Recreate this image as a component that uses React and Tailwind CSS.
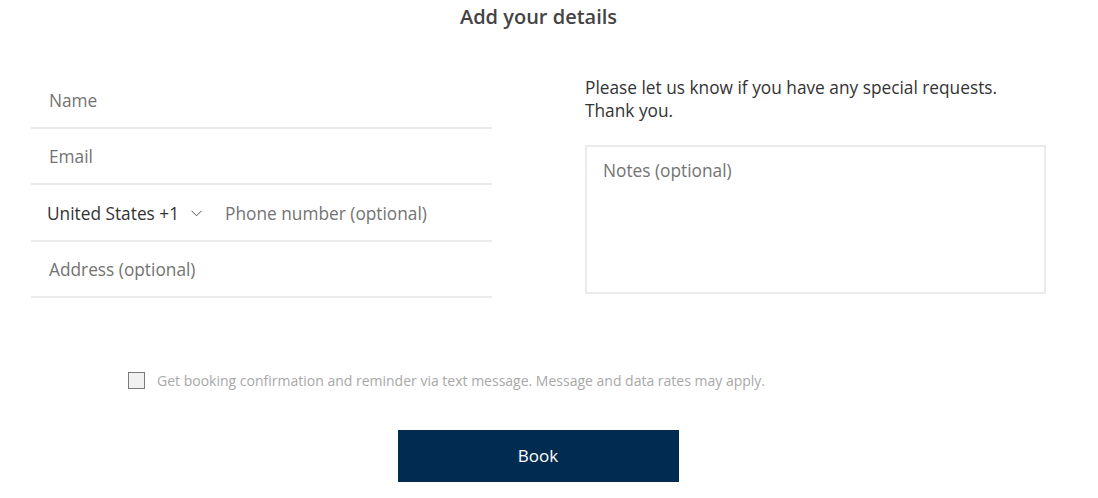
import { useState } from "react";

const FONT = { fontFamily: '"Open Sans", "Noto Sans", sans-serif' };

function Field({ placeholder, children }) {
  return (
    <div className="flex h-[56.5px] items-center border-b-2 border-[#ebebeb]">
      {children ?? (
        <input
          placeholder={placeholder}
          className="mt-[3px] w-full bg-transparent px-[18px] text-[17.3px] text-[#333] placeholder:text-[#737373] outline-none"
        />
      )}
    </div>
  );
}

export default function App() {
  const [sms, setSms] = useState(false);

  return (
    <div className="h-[498px] w-[1098px] bg-white" style={FONT}>
      <h2 className="pr-[21px] pt-[3px] text-center text-[20px] font-semibold leading-7 text-[#444]">
        Add your details
      </h2>

      <div className="mt-[41px] flex pl-[31px]">
        {/* Contact fields */}
        <div className="w-[461px]">
          <Field placeholder="Name" />
          <Field placeholder="Email" />
          <Field>
            <button className="mt-[3px] flex shrink-0 items-center gap-[12px] pl-[16px] pr-[23px] text-[17.3px] text-[#333]">
              United States +1
              <svg width="11" height="7" viewBox="0 0 11 7" fill="none">
                <path d="M0.5 0.8 L5.5 5.8 L10.5 0.8" stroke="#555" strokeWidth="1" />
              </svg>
            </button>
            <input
              placeholder="Phone number (optional)"
              className="mt-[3px] w-full bg-transparent text-[17.3px] text-[#333] placeholder:text-[#737373] outline-none"
            />
          </Field>
          <Field placeholder="Address (optional)" />
        </div>

        {/* Notes */}
        <div className="ml-[93px] w-[461px]">
          <p className="mt-[4px] text-[17.3px] leading-[23px] text-[#333]">
            Please let us know if you have any special requests.
            <br />
            Thank you.
          </p>
          <textarea
            placeholder="Notes (optional)"
            className="mt-[23px] block h-[149px] w-[461px] resize-none border-2 border-[#ebebeb] px-[16px] py-[11px] text-[17.3px] text-[#333] placeholder:text-[#737373] outline-none"
          />
        </div>
      </div>

      <label className="mt-[72px] flex items-center gap-[12px] pl-[128px]">
        <input
          type="checkbox"
          checked={sms}
          onChange={(e) => setSms(e.target.checked)}
          className="h-[17px] w-[17px] appearance-none border border-[#7a7a7a] bg-[#f1f1f1]"
        />
        <span className="text-[14px] text-[#a8a8a8]">
          Get booking confirmation and reminder via text message. Message and data rates may apply.
        </span>
      </label>

      <div className="mt-[39px] flex justify-center">
        <button className="ml-[-22px] h-[52px] w-[281px] bg-[#012b50] text-[17px] text-white">
          Book
        </button>
      </div>
    </div>
  );
}
